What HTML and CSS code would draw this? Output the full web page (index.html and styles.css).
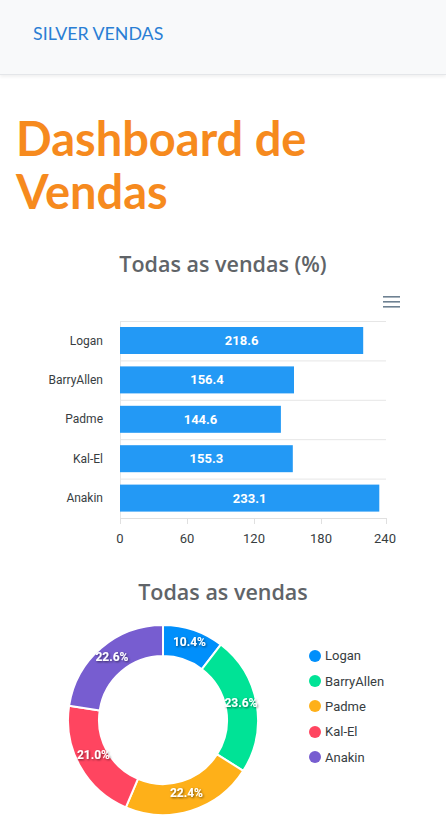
FILE: index.html
```html
<!DOCTYPE html>
<html lang="pt-BR">
<head>
<meta charset="utf-8">
<title>Silver Vendas</title>
<link rel="stylesheet" href="styles.css">
</head>
<body>
<nav class="navbar"><a class="brand" href="#">SILVER VENDAS</a></nav>
<main class="page">
  <h1 class="title">Dashboard de Vendas</h1>

  <section class="chart bar-chart">
    <h2 class="chart-title">Todas as vendas (%)</h2>
    <svg class="bar-svg" width="446" height="270" viewBox="0 0 446 270">
      <g class="menu" fill="#6e8192">
        <rect x="383" y="16" width="17" height="1.6"/>
        <rect x="383" y="21" width="17" height="1.6"/>
        <rect x="383" y="26" width="17" height="1.6"/>
      </g>
      <g class="grid" stroke="#e6e6e6" stroke-width="1">
        <line x1="120" y1="41.5" x2="386" y2="41.5"/>
        <line x1="120" y1="80.9" x2="386" y2="80.9"/>
        <line x1="120" y1="120.3" x2="386" y2="120.3"/>
        <line x1="120" y1="159.7" x2="386" y2="159.7"/>
        <line x1="120" y1="199.1" x2="386" y2="199.1"/>
        <line x1="120.5" y1="41" x2="120.5" y2="238"/>
      </g>
      <g class="bars" fill="#2399f5">
        <rect x="120" y="47" width="243.2" height="27"/>
        <rect x="120" y="86.4" width="174" height="27"/>
        <rect x="120" y="125.8" width="160.9" height="27"/>
        <rect x="120" y="165.2" width="172.8" height="27"/>
        <rect x="120" y="204.6" width="259.3" height="27"/>
      </g>
      <g class="bar-values" text-anchor="middle">
        <text x="241.6" y="65">218.6</text>
        <text x="207" y="104.4">156.4</text>
        <text x="200.5" y="143.8">144.6</text>
        <text x="206.4" y="183.2">155.3</text>
        <text x="249.6" y="222.6">233.1</text>
      </g>
      <g class="y-labels" text-anchor="end">
        <text x="103" y="64.5">Logan</text>
        <text x="103" y="103.9">BarryAllen</text>
        <text x="103" y="143.3">Padme</text>
        <text x="103" y="182.7">Kal-El</text>
        <text x="103" y="222.1">Anakin</text>
      </g>
      <g class="axis" stroke="#e0e0e0" stroke-width="1">
        <line x1="120" y1="238.5" x2="387" y2="238.5"/>
        <line x1="120.5" y1="238" x2="120.5" y2="244"/>
        <line x1="187.5" y1="238" x2="187.5" y2="244"/>
        <line x1="254.5" y1="238" x2="254.5" y2="244"/>
        <line x1="321.5" y1="238" x2="321.5" y2="244"/>
        <line x1="386.5" y1="238" x2="386.5" y2="244"/>
      </g>
      <g class="x-labels" text-anchor="middle">
        <text x="120" y="263">0</text>
        <text x="187" y="263">60</text>
        <text x="254" y="263">120</text>
        <text x="321" y="263">180</text>
        <text x="385" y="263">240</text>
      </g>
    </svg>
  </section>

  <section class="chart donut-chart">
    <h2 class="chart-title">Todas as vendas</h2>
    <div class="donut-row">
      <svg class="donut-svg" width="200" height="200" viewBox="0 0 200 200">
        <defs>
          <filter id="lblshadow" x="-20%" y="-40%" width="140%" height="180%">
            <feDropShadow dx="1" dy="1" stdDeviation="1" flood-color="#000" flood-opacity="0.55"/>
          </filter>
        </defs>
        <g stroke="#fff" stroke-width="2" stroke-linejoin="round">
          <path fill="#008ffb" d="M100 5 A95 95 0 0 1 157.76 24.58 L138.91 49.19 A64 64 0 0 0 100 36 Z"/>
          <path fill="#00e396" d="M157.76 24.58 A95 95 0 0 1 180.21 150.9 L154.04 134.29 A64 64 0 0 0 138.91 49.19 Z"/>
          <path fill="#feb019" d="M180.21 150.9 A95 95 0 0 1 62.83 187.43 L74.96 158.9 A64 64 0 0 0 154.04 134.29 Z"/>
          <path fill="#ff4560" d="M62.83 187.43 A95 95 0 0 1 6.08 85.73 L36.72 90.39 A64 64 0 0 0 74.96 158.9 Z"/>
          <path fill="#775dd0" d="M6.08 85.73 A95 95 0 0 1 100 5 L100 36 A64 64 0 0 0 36.72 90.39 Z"/>
        </g>
        <g class="donut-labels" text-anchor="middle" filter="url(#lblshadow)">
          <text x="126.5" y="25.5">10.4%</text>
          <text x="178" y="86.5">23.6%</text>
          <text x="123.5" y="176.5">22.4%</text>
          <text x="30.5" y="138.5">21.0%</text>
          <text x="49" y="40.5">22.6%</text>
        </g>
      </svg>
      <ul class="legend">
        <li class="legend-item"><span class="dot dot-logan"></span>Logan</li>
        <li class="legend-item"><span class="dot dot-barry"></span>BarryAllen</li>
        <li class="legend-item"><span class="dot dot-padme"></span>Padme</li>
        <li class="legend-item"><span class="dot dot-kalel"></span>Kal-El</li>
        <li class="legend-item"><span class="dot dot-anakin"></span>Anakin</li>
      </ul>
    </div>
  </section>
</main>
</body>
</html>
```

FILE: styles.css
```css
* { box-sizing: border-box; }

html, body {
  margin: 0;
  padding: 0;
  background: #ffffff;
}

body {
  font-family: "Open Sans", "Noto Sans", sans-serif;
  color: #373d3f;
  width: 446px;
  overflow-x: hidden;
}

.navbar {
  height: 75px;
  background: #f8f9fa;
  border-bottom: 1px solid #e4e6e9;
  box-shadow: 0 2px 3px rgba(0, 0, 0, 0.06);
  display: flex;
  align-items: center;
  padding: 0 33px 8px;
}

.brand {
  font-family: Lato, "Open Sans", sans-serif;
  font-size: 17.8px;
  color: #2a7ed4;
  text-decoration: none;
}

.page {
  padding: 0;
}

.title {
  margin: 37px 0 0;
  padding: 0 16px;
  font-family: Lato, "Open Sans", sans-serif;
  font-weight: 700;
  font-size: 47px;
  line-height: 53px;
  color: #f68a1e;
}

.chart-title {
  margin: 0;
  text-align: center;
  font-family: "Open Sans", sans-serif;
  font-weight: 600;
  font-size: 21.5px;
  line-height: 26px;
  color: #606468;
}

.bar-chart {
  margin-top: 33px;
}

.bar-svg {
  display: block;
  margin-top: 3px;
}

.bar-values text {
  font-family: Roboto, "Liberation Sans", sans-serif;
  font-weight: 700;
  font-size: 13px;
  fill: #ffffff;
}

.y-labels text {
  font-family: Roboto, "Liberation Sans", sans-serif;
  font-size: 12px;
  fill: #373d3f;
}

.x-labels text {
  font-family: Roboto, "Liberation Sans", sans-serif;
  font-size: 13px;
  fill: #373d3f;
}

.donut-chart {
  margin-top: 29px;
}

.donut-row {
  display: flex;
  align-items: flex-start;
  padding-left: 63px;
  margin-top: 15px;
}

.donut-svg {
  display: block;
  flex: none;
}

.donut-labels text {
  font-family: Roboto, "Liberation Sans", sans-serif;
  font-weight: 700;
  font-size: 12px;
  fill: #ffffff;
}

.legend {
  list-style: none;
  margin: 23px 0 0 46px;
  padding: 0;
}

.legend-item {
  display: flex;
  align-items: center;
  height: 25.4px;
  font-family: Roboto, "Liberation Sans", sans-serif;
  font-size: 13px;
  color: #373d3f;
}

.dot {
  width: 12px;
  height: 12px;
  border-radius: 50%;
  margin-right: 4px;
  flex: none;
}

.dot-logan { background: #008ffb; }
.dot-barry { background: #00e396; }
.dot-padme { background: #feb019; }
.dot-kalel { background: #ff4560; }
.dot-anakin { background: #775dd0; }
```
